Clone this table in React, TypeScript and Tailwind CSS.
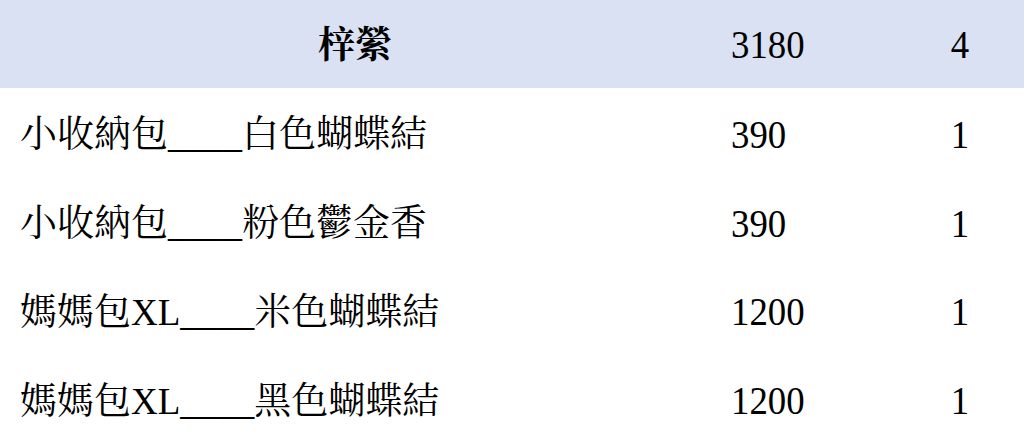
const rows = [
  { name: '小收納包____白色蝴蝶結', price: '390', qty: '1' },
  { name: '小收納包____粉色鬱金香', price: '390', qty: '1' },
  { name: '媽媽包XL____米色蝴蝶結', price: '1200', qty: '1' },
  { name: '媽媽包XL____黑色蝴蝶結', price: '1200', qty: '1' },
];

function Num({ value }: { value: string }) {
  // MingLiU-style digits are taller and narrower than Times
  return <span className="inline-block text-[40px] scale-x-[0.92] origin-left">{value}</span>;
}

export default function App() {
  return (
    <main
      className="w-[1024px] h-[443px] overflow-hidden bg-white text-black text-[37px] leading-none"
      style={{ fontFamily: '"Liberation Serif", "Noto Serif CJK TC", "Noto Sans CJK TC", serif' }}
    >
      {/* Header row */}
      <div className="grid grid-cols-[710px_186px_128px] h-[88px] pt-[2px] items-center bg-[#d9e1f2]">
        <div className="text-center font-bold">梓縈</div>
        <div className="pl-[21px]">
          <Num value="3180" />
        </div>
        <div className="text-center">
          <span className="inline-block text-[40px] scale-x-[0.92]">4</span>
        </div>
      </div>

      {rows.map((r, i) => (
        <div key={i} className="grid grid-cols-[710px_186px_128px] h-[88.75px] pt-[5px] items-center">
          <div className="pl-[20px] whitespace-nowrap">{r.name}</div>
          <div className="pl-[21px]">
            <Num value={r.price} />
          </div>
          <div className="text-center">
            <span className="inline-block text-[40px] scale-x-[0.92]">{r.qty}</span>
          </div>
        </div>
      ))}
    </main>
  );
}
